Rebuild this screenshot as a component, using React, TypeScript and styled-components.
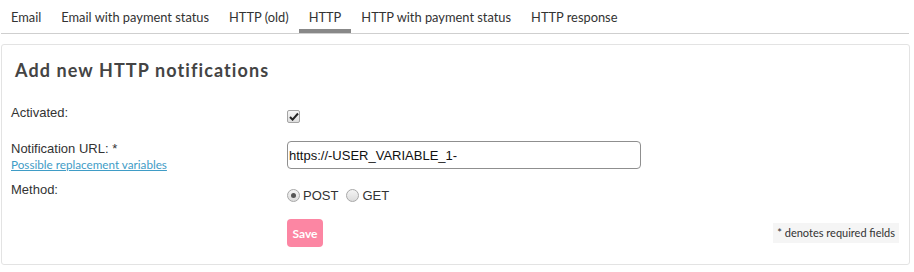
import React from "react";
import styled, { createGlobalStyle } from "styled-components";

const Global = createGlobalStyle`
  html, body { margin: 0; padding: 0; background: #fff; }
  body { font-family: Lato, "Liberation Sans", sans-serif; color: #333; }
  * { box-sizing: border-box; }
`;

const Page = styled.div`
  width: 914px;
  padding: 0 4px 0 1px;
`;

const Tabs = styled.nav`
  display: flex;
  height: 34px;
  border-bottom: 1px solid #cfcfcf;
  margin-right: 1px;
`;

const Tab = styled.div<{ $active?: boolean }>`
  font-size: 12.85px;
  color: #333;
  padding: 9px 10px 0;
  height: 33px;
  border-bottom: 4px solid ${(p) => (p.$active ? "#888" : "transparent")};
  white-space: nowrap;
`;

const Panel = styled.section`
  margin-top: 10px;
  border: 1px solid #e3e3e3;
  border-radius: 3px;
  height: 221px;
  padding: 13px 10px 0 9px;
  display: flex;
  flex-direction: column;
`;

const Title = styled.h2`
  margin: 0 0 0 4px;
  font-size: 18px;
  font-weight: 700;
  letter-spacing: 1.1px;
  color: #444;
  line-height: 24px;
`;

const Form = styled.div`
  margin-top: 22px;
  display: flex;
  flex-direction: column;
  font-family: "Liberation Sans", Arial, sans-serif;
`;

const Row = styled.div<{ $h: number }>`
  display: grid;
  grid-template-columns: 276px 1fr;
  height: ${(p) => p.$h}px;
`;

const Label = styled.div`
  font-size: 13px;
  line-height: 17px;
  color: #333;
  display: flex;
  flex-direction: column;
`;

const Hint = styled.a`
  font-size: 11.7px;
  line-height: 14px;
  color: #3f9cc6;
  text-decoration: underline;
  font-family: Lato, "Liberation Sans", sans-serif;
`;

const CheckBox = styled.span`
  margin-top: 6px;
  width: 13px;
  height: 13px;
  border: 1px solid #a4a4a4;
  border-radius: 2px;
  background: linear-gradient(#f6f6f6, #dedede);
  display: flex;
  align-items: center;
  justify-content: center;
`;

const Input = styled.div`
  margin-top: 1px;
  width: 354px;
  height: 28px;
  border: 1px solid #8f8f8f;
  border-radius: 4px;
  font-size: 13px;
  padding: 0 0 0 1px;
  display: flex;
  align-items: center;
  color: #111;
`;

const Radios = styled.div`
  display: flex;
  align-items: center;
  margin-top: 6px;
  height: 16px;
`;

const RadioItem = styled.label`
  display: flex;
  align-items: center;
  gap: 3px;
  font-size: 13px;
  color: #333;
  margin-right: 8px;
`;

const RadioDot = styled.span<{ $on?: boolean }>`
  width: 13px;
  height: 13px;
  border-radius: 50%;
  border: 1px solid #a8a8a8;
  background: linear-gradient(#f4f4f4, #dcdcdc);
  display: flex;
  align-items: center;
  justify-content: center;
  &::after {
    content: "";
    width: 5px;
    height: 5px;
    border-radius: 50%;
    background: ${(p) => (p.$on ? "#555" : "transparent")};
  }
`;

const Footer = styled.div`
  display: grid;
  grid-template-columns: 276px 1fr auto;
  align-items: center;
  margin-top: 16px;
`;

const SaveButton = styled.button`
  grid-column: 2;
  justify-self: start;
  width: 36px;
  height: 28px;
  border: none;
  border-radius: 4px;
  background: #fc86a3;
  color: #fff;
  font-family: Lato, "Liberation Sans", sans-serif;
  font-weight: 700;
  font-size: 12px;
  padding: 0;
`;

const Required = styled.div`
  background: #f5f5f5;
  font-size: 11px;
  color: #333;
  padding: 3px 4px 4px;
  margin-top: -1px;
  font-family: Lato, "Liberation Sans", sans-serif;
`;

export default function App() {
  return (
    <>
      <Global />
      <Page>
        <Tabs>
          <Tab>Email</Tab>
          <Tab>Email with payment status</Tab>
          <Tab>HTTP (old)</Tab>
          <Tab $active>HTTP</Tab>
          <Tab>HTTP with payment status</Tab>
          <Tab>HTTP response</Tab>
        </Tabs>
        <Panel>
          <Title>Add new HTTP notifications</Title>
          <Form>
            <Row $h={36}>
              <Label>Activated:</Label>
              <div>
                <CheckBox>
                  <svg width="10" height="9" viewBox="0 0 10 9">
                    <path d="M1 5 L3.6 7.6 L9 1.5" fill="none" stroke="#222" strokeWidth="2" />
                  </svg>
                </CheckBox>
              </div>
            </Row>
            <Row $h={41}>
              <Label>
                <span>Notification URL: *</span>
                <Hint href="#">Possible replacement variables</Hint>
              </Label>
              <div>
                <Input>https://-USER_VARIABLE_1-</Input>
              </div>
            </Row>
            <Row $h={22}>
              <Label>Method:</Label>
              <Radios>
                <RadioItem>
                  <RadioDot $on />
                  POST
                </RadioItem>
                <RadioItem>
                  <RadioDot />
                  GET
                </RadioItem>
              </Radios>
            </Row>
          </Form>
          <Footer>
            <SaveButton>Save</SaveButton>
            <Required>* denotes required fields</Required>
          </Footer>
        </Panel>
      </Page>
    </>
  );
}
